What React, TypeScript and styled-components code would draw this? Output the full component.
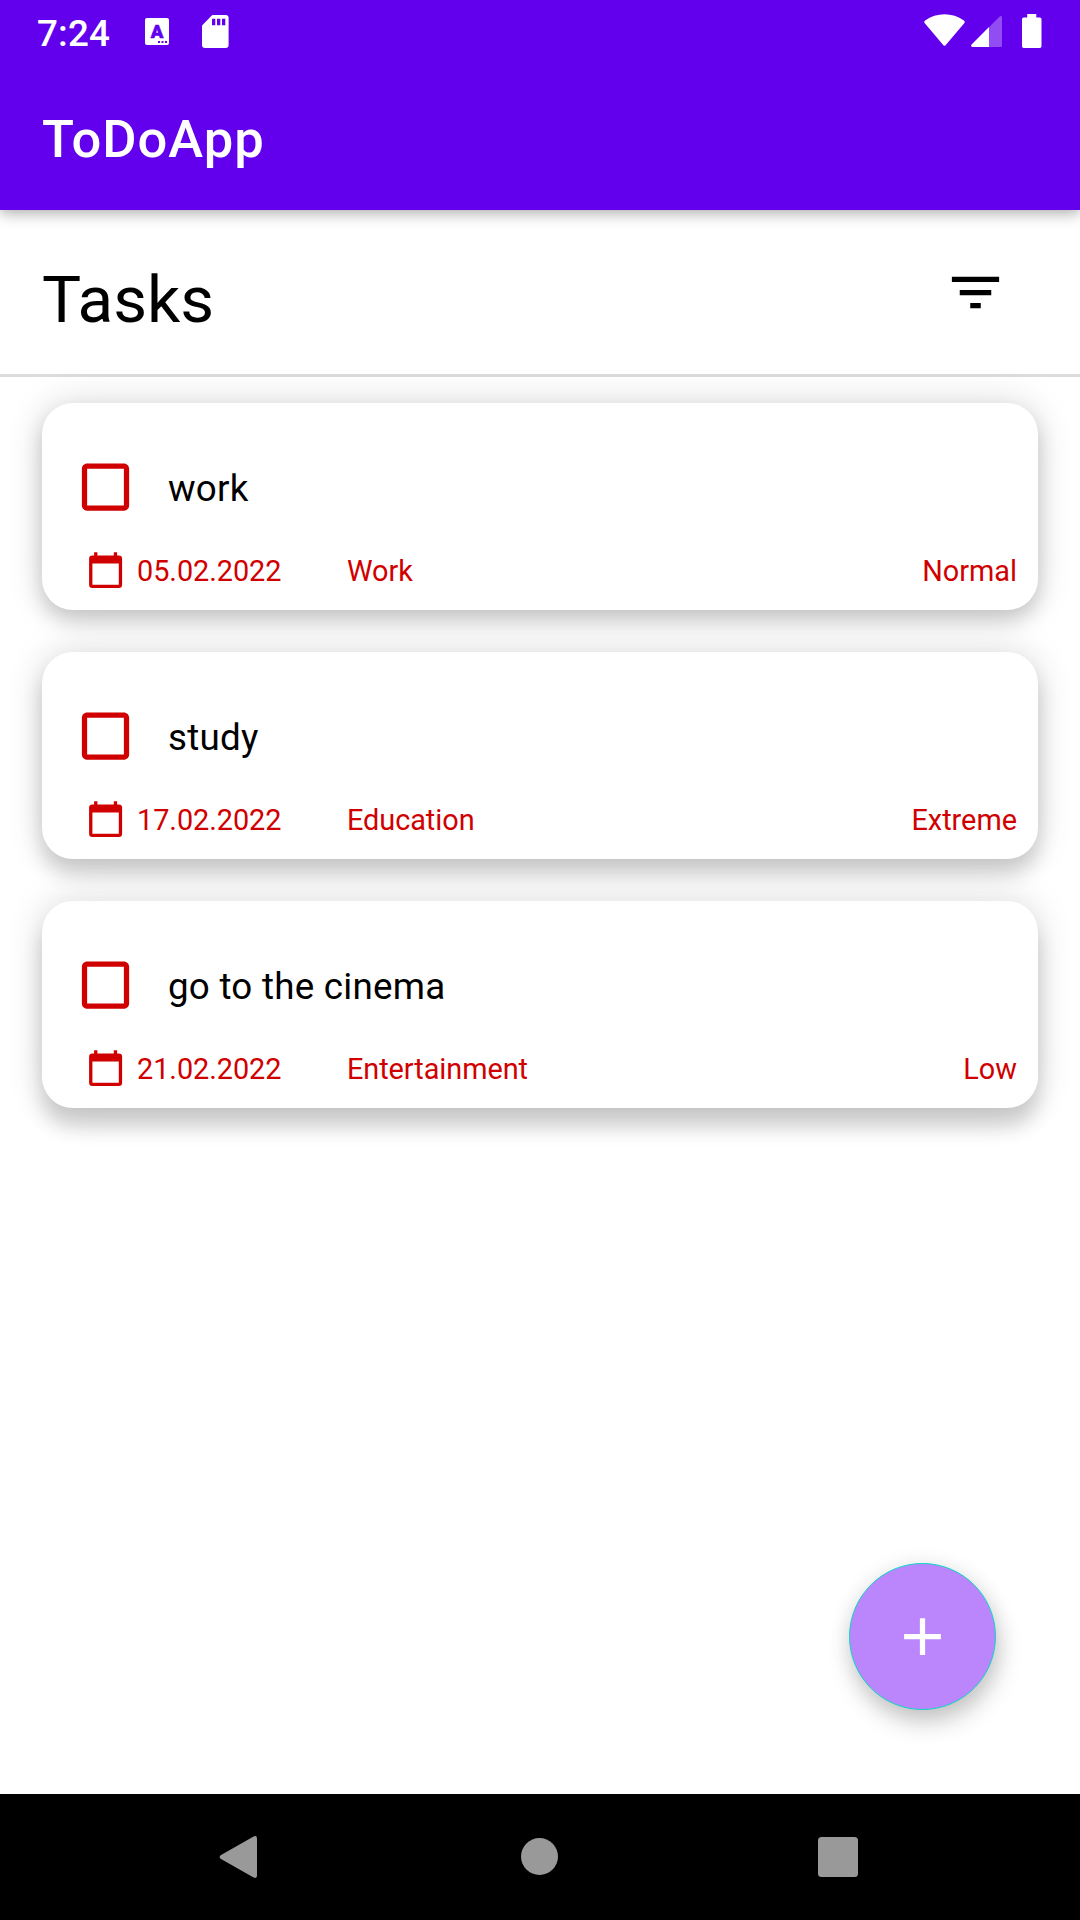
import React from "react";
import styled, { createGlobalStyle } from "styled-components";

const GlobalStyle = createGlobalStyle`
  *, *::before, *::after { box-sizing: border-box; }
  body { margin: 0; background: #fff; }
`;

const RED = "#d00000";
const PURPLE = "#6200ee";

const Screen = styled.div`
  position: relative;
  display: flex;
  flex-direction: column;
  width: 1080px;
  height: 1920px;
  overflow: hidden;
  background: #fff;
  color: #000;
  font-family: Roboto, "Noto Sans", sans-serif;
`;

const TopArea = styled.header`
  flex: none;
  height: 210px;
  background: ${PURPLE};
  color: #fff;
  box-shadow: 0 5px 14px rgba(0, 0, 0, 0.22), 0 1px 10px rgba(0, 0, 0, 0.12);
`;

const StatusBar = styled.div`
  display: flex;
  align-items: center;
  justify-content: space-between;
  height: 63px;
  padding: 0 38px 0 37px;
`;

const StatusGroup = styled.div`
  display: flex;
  align-items: center;
  height: 63px;
`;

const Clock = styled.span`
  width: 108px;
  padding-top: 3px;
  font-size: 36.75px;
  line-height: 43px;
  font-weight: 500;
  letter-spacing: 0.15px;
`;

const Icon = styled.svg`
  display: block;
  flex: none;
`;

const WifiGlyph = styled(Icon)`
  margin-bottom: 2px;
`;

const SignalGlyph = styled(Icon)`
  margin-left: 6px;
`;

const BatteryGlyph = styled(Icon)`
  margin: 0 0 1px 20px;
`;

const SdCardGlyph = styled(Icon)`
  margin-left: 33px;
`;

const HomeGlyph = styled(Icon)`
  margin: 0 0 1px 4px;
`;

const Toolbar = styled.div`
  display: flex;
  align-items: center;
  height: 147px;
  padding: 5px 42px 0;
`;

const AppTitle = styled.h1`
  margin: 0;
  font-size: 52.5px;
  line-height: 62px;
  font-weight: 500;
  letter-spacing: 1px;
`;

const SectionHeader = styled.div`
  display: flex;
  flex: none;
  align-items: center;
  justify-content: space-between;
  height: 167px;
  padding: 0 73px 0 42px;
  border-bottom: 3px solid #dcdcdc;
`;

const SectionTitle = styled.h2`
  margin: 0;
  padding-top: 15px;
  font-size: 65.6px;
  line-height: 76px;
  font-weight: 400;
`;

const FilterButton = styled.button`
  padding: 0;
  border: 0;
  background: none;
`;

const TaskList = styled.main`
  display: flex;
  flex: 1;
  flex-direction: column;
  gap: 42px;
  padding: 26px 42px;
`;

const Card = styled.article<{ $drop: number }>`
  display: flex;
  flex: none;
  flex-direction: column;
  height: 207px;
  padding: 52px 21px 0 31.6px;
  border-radius: 31px;
  background: #fff;
  box-shadow: 0 ${(p) => p.$drop}px 20px rgba(0, 0, 0, 0.16),
    0 0 36px rgba(0, 0, 0, 0.15);
`;

const TaskRow = styled.div`
  display: flex;
  align-items: center;
  height: 63px;
`;

const TaskName = styled.span`
  margin-left: 31.4px;
  padding-top: 3px;
  font-size: 36.75px;
  line-height: 43px;
  letter-spacing: 0.25px;
`;

const MetaRow = styled.div`
  display: flex;
  align-items: center;
  height: 42px;
  margin-top: 30px;
  padding-left: 10.4px;
  color: ${RED};
  font-size: 28.875px;
  line-height: 34px;
`;

const DateText = styled.span`
  width: 210px;
  margin-left: 10px;
  padding-top: 4px;
  letter-spacing: -0.05px;
`;

const Category = styled.span`
  flex: 1;
  padding-top: 4px;
  letter-spacing: -0.05px;
`;

const Priority = styled.span`
  padding-top: 4px;
`;

const Fab = styled.button`
  position: absolute;
  right: 84px;
  bottom: 210px;
  display: flex;
  align-items: center;
  justify-content: center;
  width: 147px;
  height: 147px;
  padding: 0;
  border: 1px solid #0cd6c8;
  border-radius: 50%;
  background: #bb86fc;
  box-shadow: 3px 13px 24px -1px rgba(0, 0, 0, 0.21), 0 1px 22px rgba(0, 0, 0, 0.08);
`;

const NavBar = styled.nav`
  display: flex;
  flex: none;
  align-items: center;
  justify-content: space-between;
  height: 126px;
  padding: 0 222px 0 219px;
  background: #000;
`;

const LanguageIcon = () => (
  <Icon width="24" height="27" viewBox="0 0 24 27">
    <rect width="24" height="27" rx="2" fill="#fff" />
    <text x="12" y="20" textAnchor="middle" fontFamily="Roboto, sans-serif" fontWeight="900" fontSize="18.5" fill={PURPLE} stroke={PURPLE} strokeWidth="0.6">
      A
    </text>
    <path d="M13 23h2v2h-2zM16.5 23h2v2h-2zM20 23h2v2h-2z" fill={PURPLE} />
  </Icon>
);

const SdCardIcon = () => (
  <SdCardGlyph width="27" height="33" viewBox="0 0 27 33">
    <path d="M10.3 0H23.6a3 3 0 0 1 3 3V30a3 3 0 0 1-3 3H3a3 3 0 0 1-3-3V10.6Z" fill="#fff" />
    <path d="M10 3.7h3.3v6.6H10zM15 3.7h3.3v6.6H15zM20 3.7h3.3v6.6H20z" fill={PURPLE} />
  </SdCardGlyph>
);

const WifiIcon = () => (
  <WifiGlyph width="41" height="33" viewBox="0 0 41 33">
    <path d="M.8 9.2C-.1 8.3.1 7.3 1.1 6.5 12.5-1.9 28.5-1.9 39.9 6.5 40.9 7.3 41.1 8.3 40.2 9.2L21.6 31.2Q20.5 32.3 19.4 31.2Z" fill="#fff" />
  </WifiGlyph>
);

const SignalIcon = () => (
  <SignalGlyph width="31" height="31" viewBox="0 0 31 31">
    <path d="M18 11.2 28.4.7Q31-.8 31 1.6V29.5Q31 31 29.5 31H18Z" fill="#fff" opacity=".3" />
    <path d="M18 11V31H1.3Q-.7 30.6.6 28.4Z" fill="#fff" />
  </SignalGlyph>
);

const BatteryIcon = () => (
  <BatteryGlyph width="20" height="34" viewBox="0 0 20 34">
    <path d="M5.2 0h9.1v3.6h3.5a1.7 1.7 0 0 1 1.7 1.7V32.3A1.7 1.7 0 0 1 17.8 34H1.7A1.7 1.7 0 0 1 0 32.3V5.3A1.7 1.7 0 0 1 1.7 3.6H5.2Z" fill="#fff" />
  </BatteryGlyph>
);

const Checkbox = () => (
  <Icon width="63" height="63" viewBox="0 -0.2 24 24" role="checkbox" aria-checked={false}>
    <path d="M19 5v14H5V5h14m0-2H5c-1.1 0-2 .9-2 2v14c0 1.1.9 2 2 2h14c1.1 0 2-.9 2-2V5c0-1.1-.9-2-2-2z" fill={RED} />
  </Icon>
);

const CalendarIcon = () => (
  <Icon width="43" height="43" viewBox="0 0 43 43">
    <path
      fillRule="evenodd"
      d="M8.4 7.5h1.7v-3.3h3.3v3.3h16.4v-3.3h3.3v3.3h1.7a3.3 3.3 0 0 1 3.3 3.3V36.8a3.3 3.3 0 0 1-3.3 3.3H8.4a3.3 3.3 0 0 1-3.3-3.3V10.8a3.3 3.3 0 0 1 3.3-3.3ZM8.4 15.5V36.8H34.8V15.5Z"
      fill={RED}
    />
  </Icon>
);

const tasks = [
  { name: "work", date: "05.02.2022", category: "Work", priority: "Normal", drop: 11 },
  { name: "study", date: "17.02.2022", category: "Education", priority: "Extreme", drop: 15 },
  { name: "go to the cinema", date: "21.02.2022", category: "Entertainment", priority: "Low", drop: 19 },
];

export default function App() {
  return (
    <>
      <GlobalStyle />
      <Screen>
        <TopArea>
          <StatusBar>
            <StatusGroup>
              <Clock>7:24</Clock>
              <LanguageIcon />
              <SdCardIcon />
            </StatusGroup>
            <StatusGroup>
              <WifiIcon />
              <SignalIcon />
              <BatteryIcon />
            </StatusGroup>
          </StatusBar>
          <Toolbar>
            <AppTitle>ToDoApp</AppTitle>
          </Toolbar>
        </TopArea>
        <SectionHeader>
          <SectionTitle>Tasks</SectionTitle>
          <FilterButton aria-label="Filter">
            <Icon width="63" height="63" viewBox="0 0 24 24">
              <path d="M10 18h4v-2h-4v2zM3 6v2h18V6H3zm3 7h12v-2H6v2z" fill="#000" />
            </Icon>
          </FilterButton>
        </SectionHeader>
        <TaskList>
          {tasks.map((task) => (
            <Card key={task.name} $drop={task.drop}>
              <TaskRow>
                <Checkbox />
                <TaskName>{task.name}</TaskName>
              </TaskRow>
              <MetaRow>
                <CalendarIcon />
                <DateText>{task.date}</DateText>
                <Category>{task.category}</Category>
                <Priority>{task.priority}</Priority>
              </MetaRow>
            </Card>
          ))}
        </TaskList>
        <Fab aria-label="Add task">
          <Icon width="63" height="63" viewBox="0 0 24 24">
            <path d="M19 13h-6v6h-2v-6H5v-2h6V5h2v6h6v2z" fill="#fff" />
          </Icon>
        </Fab>
        <NavBar>
          <Icon width="38" height="42" viewBox="0 0 38 42">
            <path d="M1.6 19.2 34.6.5Q38-.8 38 2.4V39.6Q38 42.8 34.6 41.5L1.6 22.8Q-.4 21 1.6 19.2Z" fill="#999" />
          </Icon>
          <HomeGlyph width="37" height="37" viewBox="0 0 37 37">
            <circle cx="18.5" cy="18.5" r="18.5" fill="#999" />
          </HomeGlyph>
          <Icon width="40" height="40" viewBox="0 0 40 40">
            <rect width="40" height="40" rx="3.5" fill="#999" />
          </Icon>
        </NavBar>
      </Screen>
    </>
  );
}
